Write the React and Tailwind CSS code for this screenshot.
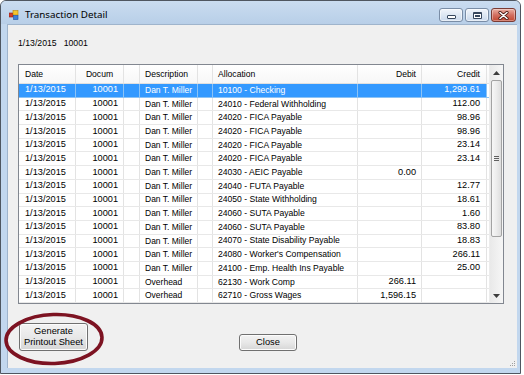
import React from "react";

const rows = [
  ["Dan T. Miller", "10100 - Checking", "", "1,299.61", true],
  ["Dan T. Miller", "24010 - Federal Withholding", "", "112.00"],
  ["Dan T. Miller", "24020 - FICA Payable", "", "98.96"],
  ["Dan T. Miller", "24020 - FICA Payable", "", "98.96"],
  ["Dan T. Miller", "24020 - FICA Payable", "", "23.14"],
  ["Dan T. Miller", "24020 - FICA Payable", "", "23.14"],
  ["Dan T. Miller", "24030 - AEIC Payable", "0.00", ""],
  ["Dan T. Miller", "24040 - FUTA Payable", "", "12.77"],
  ["Dan T. Miller", "24050 - State Withholding", "", "18.61"],
  ["Dan T. Miller", "24060 - SUTA Payable", "", "1.60"],
  ["Dan T. Miller", "24060 - SUTA Payable", "", "83.80"],
  ["Dan T. Miller", "24070 - State Disability Payable", "", "18.83"],
  ["Dan T. Miller", "24080 - Worker's Compensation", "", "266.11"],
  ["Dan T. Miller", "24100 - Emp. Health Ins Payable", "", "25.00"],
  ["Overhead", "62130 - Work Comp", "266.11", ""],
  ["Overhead", "62710 - Gross Wages", "1,596.15", ""],
];

function Row({ r }) {
  const sel = r[4];
  const base = sel
    ? "bg-[#3399ff] text-white border-[#8cc3f5]"
    : "bg-white text-black border-[#e3e3e3]";
  const cell = "h-full flex items-center border-r whitespace-nowrap overflow-hidden " + base;
  return (
    <div className={"flex h-[13.69px] border-b shrink-0 " + (sel ? "border-[#8cc3f5]" : "border-[#e8e8e8]")}>
      <div className={cell + " w-[57px] pl-[6px] text-[9.2px]"}>1/13/2015</div>
      <div className={cell + " w-[48px] justify-end pr-[5px] text-[9.2px]"}>10001</div>
      <div className={cell + " w-[16px]"}></div>
      <div className={cell + " w-[58px] pl-[5px] text-[8.5px]"}>{r[0]}</div>
      <div className={cell + " w-[15px]"}></div>
      <div className={cell + " w-[145px] pl-[5px] text-[8.6px]"}>{r[1]}</div>
      <div className={cell + " w-[64px] justify-end pr-[5px] text-[9.2px]"}>{r[2]}</div>
      <div className={cell + " w-[65px] justify-end pr-[6px] text-[9.2px]"}>{r[3]}</div>
    </div>
  );
}

function WinButton({ kind }) {
  if (kind === "close") {
    return (
      <div className="w-[25px] h-[14px] rounded-[3px] border border-[#7b3b33] bg-gradient-to-b from-[#eab0a4] via-[#d26e60] to-[#c2462f] flex items-center justify-center shadow-[inset_0_0_0_1px_rgba(255,255,255,0.35)]">
        <svg width="11" height="9" viewBox="0 0 11 9">
          <path d="M2 1.5 L9 7.5 M9 1.5 L2 7.5" stroke="#4a1a14" strokeWidth="3.2" strokeLinecap="round" />
          <path d="M2 1.5 L9 7.5 M9 1.5 L2 7.5" stroke="#ffffff" strokeWidth="1.6" strokeLinecap="round" />
        </svg>
      </div>
    );
  }
  return (
    <div className="w-[24px] h-[14px] rounded-[3px] border border-[#7a8da6] bg-gradient-to-b from-[#f1f5fb] via-[#dde7f3] to-[#cad9ec] flex items-center justify-center shadow-[inset_0_0_0_1px_rgba(255,255,255,0.55)]">
      {kind === "min" ? (
        <div className="w-[9px] h-[4px] mt-[4px] border border-[#36475e] bg-white rounded-[1px]" />
      ) : (
        <div className="w-[9px] h-[7px] border border-[#36475e] border-t-[2px] bg-white rounded-[1px] flex items-center justify-center">
          <div className="w-[5px] h-[2px] bg-[#36475e]" />
        </div>
      )}
    </div>
  );
}

function Btn({ children, cls }) {
  return (
    <div className={"rounded-[3px] border border-[#707070] bg-gradient-to-b from-[#f3f3f3] via-[#e8e8e8] to-[#d6d6d6] shadow-[inset_0_0_0_1px_#fcfcfc] flex flex-col items-center justify-center text-black text-[9.3px] leading-[11px] " + cls}>
      {children}
    </div>
  );
}

export default function App() {
  return (
    <div className="w-[524px] h-[375px] bg-white overflow-hidden" style={{ fontFamily: '"Liberation Sans", Arial, sans-serif' }}>
      <div className="w-[521px] h-[374px] border border-[#4f5660] rounded-t-[6px] bg-[#c2d7ee] flex flex-col">
        {/* title bar */}
        <div className="h-[23px] shrink-0 flex items-start bg-gradient-to-b from-[#cadcf0] to-[#b8cfe8] rounded-t-[5px]">
          <div className="ml-[8px] mt-[9px] w-[10px] h-[10px] shrink-0">
            <svg width="10" height="10" viewBox="0 0 10 10">
              <rect x="0" y="3" width="4" height="4" fill="#d23b2b" stroke="#8a1c12" strokeWidth="0.6" />
              <rect x="4" y="0.5" width="5" height="4.5" fill="#f4c430" stroke="#b8860b" strokeWidth="0.6" />
              <rect x="4.5" y="5.5" width="4.5" height="4" fill="#3d7fd9" stroke="#1c4f99" strokeWidth="0.6" />
            </svg>
          </div>
          <div className="ml-[6px] mt-[8px] text-[9.8px] leading-[12px] text-black" style={{ fontFamily: '"Noto Sans", "Liberation Sans", sans-serif' }}>
            Transaction Detail
          </div>
          <div className="ml-auto mr-[4px] mt-[7px] flex gap-[2px]">
            <WinButton kind="min" />
            <WinButton kind="max" />
            <WinButton kind="close" />
          </div>
        </div>
        {/* body */}
        <div className="flex-1 flex pl-[6px] pr-[3px] pb-[5px]">
          <div className="relative flex-1 bg-[#f0f0f0] border-l border-t border-[#9fb4cc] flex flex-col pl-[10px] text-black">
            <div className="mt-[13px] h-[11px] flex items-center text-[8.7px] leading-[11px]">
              <span>1/13/2015</span>
              <span className="ml-[7px]">10001</span>
            </div>
            {/* grid */}
            <div className="mt-[15px] w-[486px] h-[240px] border border-[#828790] bg-white flex">
              <div className="w-[470px] flex flex-col overflow-hidden">
                <div className="h-[19px] shrink-0 flex border-b border-[#e0e0e0] bg-gradient-to-b from-white to-[#f7f7f7] text-[8.6px]">
                  <div className="w-[57px] border-r border-[#e3e3e3] flex items-center pl-[6px]">Date</div>
                  <div className="w-[48px] border-r border-[#e3e3e3] flex items-center justify-center">Docum</div>
                  <div className="w-[16px] border-r border-[#e3e3e3]"></div>
                  <div className="w-[58px] border-r border-[#e3e3e3] flex items-center pl-[5px]">Description</div>
                  <div className="w-[15px] border-r border-[#e3e3e3]"></div>
                  <div className="w-[145px] border-r border-[#e3e3e3] flex items-center pl-[5px]">Allocation</div>
                  <div className="w-[64px] border-r border-[#e3e3e3] flex items-center justify-end pr-[5px]">Debit</div>
                  <div className="w-[65px] border-r border-[#e3e3e3] flex items-center justify-end pr-[6px]">Credit</div>
                </div>
                {rows.map((r, i) => (
                  <Row key={i} r={r} />
                ))}
              </div>
              {/* scrollbar */}
              <div className="w-[14px] ml-auto flex flex-col bg-gradient-to-r from-[#e9e9e9] to-[#f6f6f6] border-l border-[#ececec]">
                <div className="h-[15px] flex items-center justify-center">
                  <svg width="7" height="4" viewBox="0 0 7 4"><path d="M0 4 L3.5 0 L7 4 Z" fill="#3c3c3c" /></svg>
                </div>
                <div className="ml-[1px] mr-[1px] h-[157px] rounded-[2px] border border-[#a3a3a3] bg-gradient-to-r from-[#f7f7f7] via-[#ececec] to-[#dedede] flex flex-col items-center justify-center gap-[1px]">
                  <div className="w-[5px] h-[1px] bg-[#606060]" />
                  <div className="w-[5px] h-[1px] bg-[#606060]" />
                  <div className="w-[5px] h-[1px] bg-[#606060]" />
                </div>
                <div className="flex-1" />
                <div className="h-[15px] flex items-center justify-center">
                  <svg width="7" height="4" viewBox="0 0 7 4"><path d="M0 0 L7 0 L3.5 4 Z" fill="#3c3c3c" /></svg>
                </div>
              </div>
            </div>
            {/* buttons */}
            <div className="flex items-end mt-[19px]">
              <Btn cls="ml-[1px] w-[69px] h-[28px]">
                <span>Generate</span>
                <span>Printout Sheet</span>
              </Btn>
              <Btn cls="ml-[151px] w-[58px] h-[17px]">
                <span>Close</span>
              </Btn>
            </div>
            {/* red highlight ellipse */}
            <svg className="absolute left-[-5px] top-[287px]" width="102" height="54" viewBox="0 0 102 54">
              <ellipse cx="51" cy="27" rx="48" ry="24.5" fill="none" stroke="#7d1322" strokeWidth="3.6" transform="rotate(-2 51 27)" />
            </svg>
            {/* resize grip */}
            <svg className="absolute right-[1px] bottom-[1px]" width="8" height="8" viewBox="0 0 8 8">
              <rect x="6" y="2" width="1" height="1" fill="#a0a0a0" />
              <rect x="4" y="4" width="1" height="1" fill="#a0a0a0" />
              <rect x="6" y="4" width="1" height="1" fill="#a0a0a0" />
              <rect x="2" y="6" width="1" height="1" fill="#a0a0a0" />
              <rect x="4" y="6" width="1" height="1" fill="#a0a0a0" />
              <rect x="6" y="6" width="1" height="1" fill="#a0a0a0" />
            </svg>
          </div>
        </div>
      </div>
    </div>
  );
}
